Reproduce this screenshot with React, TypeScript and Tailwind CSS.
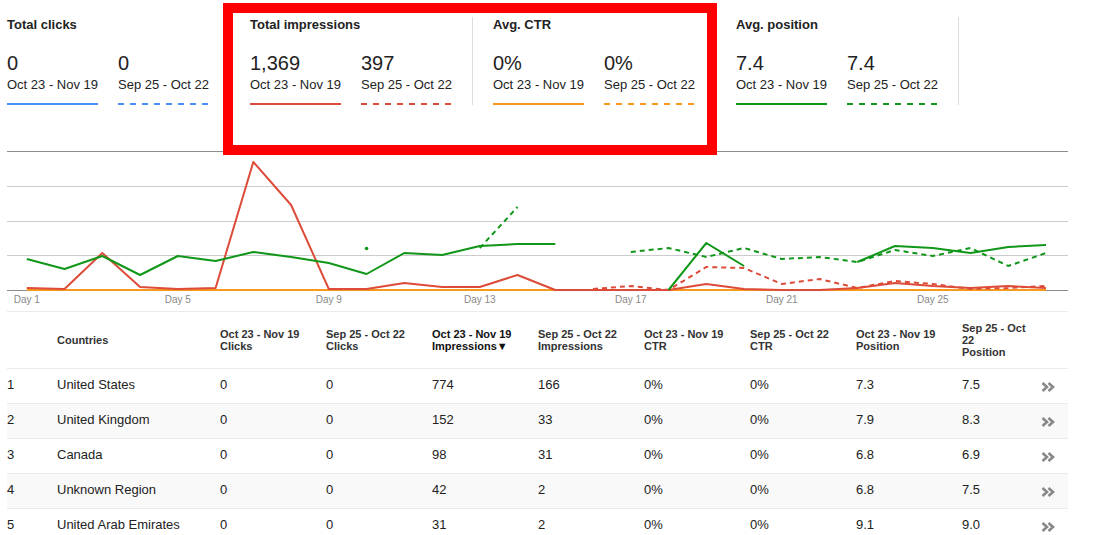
const metrics = [
  {
    title: "Total clicks",
    current: "0",
    previous: "0",
    solid: "bg-[#4d8ef5]",
    dashed: "bg-[repeating-linear-gradient(90deg,#4d8ef5_0_6px,transparent_6px_12px)]",
  },
  {
    title: "Total impressions",
    current: "1,369",
    previous: "397",
    solid: "bg-[#dd4b39]",
    dashed: "bg-[repeating-linear-gradient(90deg,#dd4b39_0_6px,transparent_6px_12px)]",
  },
  {
    title: "Avg. CTR",
    current: "0%",
    previous: "0%",
    solid: "bg-[#f7991c]",
    dashed: "bg-[repeating-linear-gradient(90deg,#f7991c_0_6px,transparent_6px_12px)]",
  },
  {
    title: "Avg. position",
    current: "7.4",
    previous: "7.4",
    solid: "bg-[#109618]",
    dashed: "bg-[repeating-linear-gradient(90deg,#109618_0_6px,transparent_6px_12px)]",
  },
];

const rows = [
  ["1", "United States", "0", "0", "774", "166", "0%", "0%", "7.3", "7.5"],
  ["2", "United Kingdom", "0", "0", "152", "33", "0%", "0%", "7.9", "8.3"],
  ["3", "Canada", "0", "0", "98", "31", "0%", "0%", "6.8", "6.9"],
  ["4", "Unknown Region", "0", "0", "42", "2", "0%", "0%", "6.8", "7.5"],
  ["5", "United Arab Emirates", "0", "0", "31", "2", "0%", "0%", "9.1", "9.0"],
];

type Y = number | null;

// y values in page pixels, one per day (1..28); null = no data
const greenSolid: Y[] = [
  259, 269, 256, 275, 256, 261, 252, 257, 263, 274, 253, 255, 246, 244, 244,
  null, null, 290, 243, 266, null, null, 262, 246, 248, 253, 247, 245,
];
const greenDashed: Y[] = [
  null, null, null, null, null, null, null, null, null, null, null, null, 248, 207,
  null, null, 252, 248, 257, 248, 259, 257, 262, 250, 256, 248, 266, 253,
];
const redSolid: Y[] = [
  288, 289, 253, 287, 289, 288, 162, 205, 289, 289, 283, 287, 287, 275, 290,
  290, 290, 290, 284, 289, 290, 290, 288, 283, 286, 288, 286, 288,
];
const redDashed: Y[] = [
  null, null, null, null, null, null, null, null, null, null, null, null, null, null, null,
  289, 286, 290, 267, 268, 284, 279, 288, 281, 284, 289, 288, 286,
];

const dayX = (d: number) => 26.8 + (d - 1) * 37.75;

function toPath(ys: Y[]) {
  let out = "";
  let pen = false;
  ys.forEach((y, i) => {
    if (y === null) {
      pen = false;
      return;
    }
    out += `${pen ? "L" : "M"}${dayX(i + 1).toFixed(1)} ${y} `;
    pen = true;
  });
  return out;
}

function Chart() {
  const days = [1, 5, 9, 13, 17, 21, 25];
  return (
    <svg width={1061} height={160} viewBox="7 151 1061 160" className="block">
      <line x1={7} x2={1068} y1={151.5} y2={151.5} stroke="#8c8c8c" />
      {[186.5, 221.5, 255.5].map((y) => (
        <line key={y} x1={7} x2={1068} y1={y} y2={y} stroke="#cccccc" />
      ))}
      <line x1={7} x2={1068} y1={290.5} y2={290.5} stroke="#8c8c8c" />
      <path d={`M${dayX(1)} 290 L${dayX(28)} 290`} stroke="#f7991c" strokeWidth={2} fill="none" />
      <path d={toPath(redDashed)} stroke="#dd4b39" strokeWidth={2} strokeDasharray="5 4" fill="none" />
      <path d={toPath(redSolid)} stroke="#dd4b39" strokeWidth={2} fill="none" strokeLinejoin="round" />
      <path d={toPath(greenDashed)} stroke="#109618" strokeWidth={2} strokeDasharray="5 4" fill="none" />
      <circle cx={dayX(10)} cy={248.5} r={1.8} fill="#109618" />
      <path d={toPath(greenSolid)} stroke="#109618" strokeWidth={2} fill="none" strokeLinejoin="round" />
      {days.map((d) => (
        <text
          key={d}
          x={dayX(d)}
          y={302.5}
          textAnchor="middle"
          fontSize={10}
          fill="#888"
          fontFamily="'Liberation Sans', Arial, sans-serif"
        >
          Day {d}
        </text>
      ))}
    </svg>
  );
}

function Chevron() {
  return (
    <svg width={14} height={10} viewBox="0 0 14 10" className="block">
      <polyline points="1.5,1 6,5 1.5,9" fill="none" stroke="#888" strokeWidth={2.6} />
      <polyline points="7.5,1 12,5 7.5,9" fill="none" stroke="#888" strokeWidth={2.6} />
    </svg>
  );
}

const gridCols = "grid grid-cols-[50px_163px_repeat(7,106px)_70px_1fr]";

export default function App() {
  return (
    <div className="relative h-[535px] w-[1108px] overflow-hidden bg-white font-['Liberation_Sans',Arial,sans-serif] text-[#222]">
      <div className="w-[1068px] pl-[7px]">
        {/* metric cards */}
        <div className="flex pt-[17px]">
          {metrics.map((m) => (
            <div key={m.title} className="mr-5 h-[88px] border-r border-[#dddddd] pr-5">
              <p className="text-[13px] font-bold leading-4">{m.title}</p>
              <div className="flex gap-5">
                {[
                  { value: m.current, date: "Oct 23 - Nov 19", bar: m.solid },
                  { value: m.previous, date: "Sep 25 - Oct 22", bar: m.dashed },
                ].map((s) => (
                  <div key={s.date} className="w-[91px]">
                    <p className="mt-[18px] text-[20px] leading-6">{s.value}</p>
                    <p className="mt-[2px] whitespace-nowrap text-[13px] leading-4">{s.date}</p>
                    <div className={`mt-[10px] h-[2px] w-[91px] ${s.bar}`} />
                  </div>
                ))}
              </div>
            </div>
          ))}
        </div>

        <div className="mt-[46px]">
          <Chart />
        </div>

        {/* countries table */}
        <div className="w-[1061px]">
          <div className={`${gridCols} h-[57px] items-center border-t border-[#ebebeb] text-[11px] font-bold leading-3 text-[#333]`}>
            <div />
            <div>Countries</div>
            <div>Oct 23 - Nov 19<br />Clicks</div>
            <div>Sep 25 - Oct 22<br />Clicks</div>
            <div className="text-[#111]">
              Oct 23 - Nov 19<br />Impressions<span className="text-[11px]">▼</span>
            </div>
            <div>Sep 25 - Oct 22<br />Impressions</div>
            <div>Oct 23 - Nov 19<br />CTR</div>
            <div>Sep 25 - Oct 22<br />CTR</div>
            <div>Oct 23 - Nov 19<br />Position</div>
            <div>Sep 25 - Oct 22<br />Position</div>
            <div />
          </div>
          {rows.map((r, i) => (
            <div
              key={r[0]}
              className={`${gridCols} h-[35px] items-center border-t border-[#ebebeb] pb-[2px] text-[13px] ${
                i % 2 === 1 ? "bg-[#f9f9f9]" : "bg-white"
              }`}
            >
              {r.map((cell, j) => (
                <div key={j} className="whitespace-nowrap">
                  {cell}
                </div>
              ))}
              <div className="pl-[9px] pt-[4px]">
                <Chevron />
              </div>
            </div>
          ))}
        </div>
      </div>

      {/* annotation frame */}
      <div className="absolute left-[223px] top-[3px] h-[152px] w-[494px] border-[10px] border-[#ff0000]" />
    </div>
  );
}
